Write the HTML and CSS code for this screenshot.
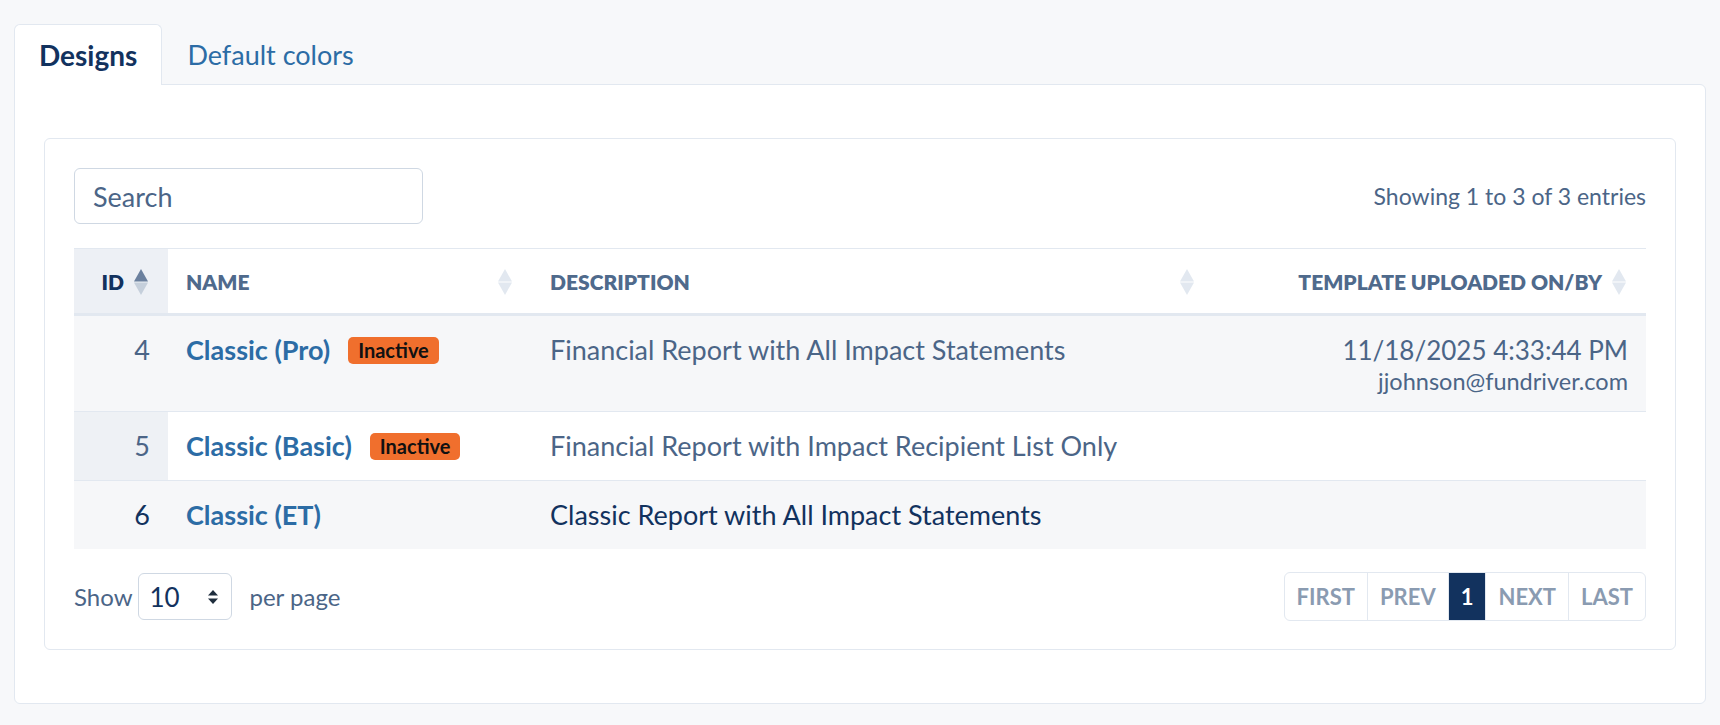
FILE: index.html
```html
<!DOCTYPE html>
<html lang="en">
<head>
  <meta charset="UTF-8" />
  <meta name="viewport" content="width=device-width, initial-scale=1.0" />
  <title>Report Designs</title>
  <link rel="stylesheet" href="styles.css">
</head>
<body>
  <div class="tabs">
    <a class="tab active" href="#">Designs</a>
    <a class="tab" href="#">Default colors</a>
  </div>

  <div class="panel">
    <div class="card">
      <div class="toolbar">
        <input type="text" class="search" placeholder="Search" />
        <div class="info">Showing 1 to 3 of 3 entries</div>
      </div>

      <table class="grid">
        <thead>
          <tr>
            <th class="col-id sorted">ID
              <svg class="sort" viewBox="0 0 14 26"><path class="up" d="M7 0 L14 12.5 L0 12.5 Z"/><path class="down" d="M0 13.5 L14 13.5 L7 26 Z"/></svg>
            </th>
            <th class="col-name">Name
              <svg class="sort" viewBox="0 0 14 26"><path d="M7 0 L14 12.5 L0 12.5 Z"/><path d="M0 13.5 L14 13.5 L7 26 Z"/></svg>
            </th>
            <th class="col-desc">Description
              <svg class="sort" viewBox="0 0 14 26"><path d="M7 0 L14 12.5 L0 12.5 Z"/><path d="M0 13.5 L14 13.5 L7 26 Z"/></svg>
            </th>
            <th class="col-date">Template uploaded on/by
              <svg class="sort" viewBox="0 0 14 26"><path d="M7 0 L14 12.5 L0 12.5 Z"/><path d="M0 13.5 L14 13.5 L7 26 Z"/></svg>
            </th>
          </tr>
        </thead>
        <tbody>
          <tr class="muted">
            <td class="col-id">4</td>
            <td><a href="#" class="name">Classic (Pro)</a><span class="badge">Inactive</span></td>
            <td>Financial Report with All Impact Statements</td>
            <td class="col-date">
              <div class="on">11/18/2025 4:33:44 PM</div>
              <div class="by">jjohnson@fundriver.com</div>
            </td>
          </tr>
          <tr class="muted">
            <td class="col-id">5</td>
            <td><a href="#" class="name">Classic (Basic)</a><span class="badge">Inactive</span></td>
            <td>Financial Report with Impact Recipient List Only</td>
            <td class="col-date"></td>
          </tr>
          <tr>
            <td class="col-id">6</td>
            <td><a href="#" class="name">Classic (ET)</a></td>
            <td>Classic Report with All Impact Statements</td>
            <td class="col-date"></td>
          </tr>
        </tbody>
      </table>

      <div class="footer">
        <div class="length">
          Show
          <div class="select">10
            <svg viewBox="0 0 10 14"><path d="M5 0 L10 5.5 L0 5.5 Z"/><path d="M0 8.5 L10 8.5 L5 14 Z"/></svg>
          </div>
          per page
        </div>
        <div class="pager">
          <a href="#">First</a>
          <a href="#">Prev</a>
          <a href="#" class="current">1</a>
          <a href="#">Next</a>
          <a href="#">Last</a>
        </div>
      </div>
    </div>
  </div>
</body>
</html>
```

FILE: styles.css
```css
body {
  font-family: Lato, "Noto Sans", sans-serif;
  margin: 0;
  padding: 24px 14px 0;
  background: #f7f8fa;
  color: #4b6587;
}
a {
  text-decoration: none;
}
.tabs {
  display: flex;
  height: 60px;
}
.tab {
  display: flex;
  align-items: center;
  padding: 0 24px;
  font-size: 27px;
  color: #2c6ca5;
  border: 1px solid transparent;
  border-bottom: none;
  border-radius: 6px 6px 0 0;
}
.tab.active {
  background: white;
  color: #12325e;
  font-size: 28px;
  font-weight: bold;
  border-color: #e2e8f0;
  margin-bottom: -1px;
  position: relative;
  z-index: 1;
}
.panel {
  background: white;
  border: 1px solid #e2e8f0;
  border-radius: 0 6px 6px 6px;
  padding: 53px 29px;
}
.card {
  border: 1px solid #e2e8f0;
  border-radius: 6px;
  padding: 29px 29px 28px;
}
.toolbar {
  display: flex;
  justify-content: space-between;
  align-items: center;
  margin-bottom: 24px;
}
.search {
  width: 349px;
  height: 56px;
  box-sizing: border-box;
  border: 1px solid #cfd8e3;
  border-radius: 6px;
  padding: 0 18px;
  font-family: inherit;
  font-size: 27px;
  color: #12325e;
}
.search::placeholder {
  color: #4b6587;
}
.info {
  font-size: 23px;
}
.grid {
  width: 100%;
  border-collapse: collapse;
  border-top: 1px solid #e2e8f0;
}
.grid th {
  position: relative;
  height: 64px;
  padding: 0 44px 0 18px;
  text-align: left;
  font-size: 21px;
  font-weight: 800;
  text-transform: uppercase;
  color: #4f6a8c;
  border-bottom: 3px solid #e2e8f0;
}
.grid th.col-id {
  color: #12325e;
}
.sort {
  position: absolute;
  right: 20px;
  top: 20px;
  width: 14px;
  height: 26px;
  fill: #e2e8f0;
}
.sorted .sort .up {
  fill: #6b809e;
}
.sorted .sort .down {
  fill: #c5cfdb;
}
.col-id {
  width: 32px;
  text-align: right !important;
  background: #edf0f5;
}
.col-name {
  width: 302px;
}
.col-desc {
  width: 620px;
}
.col-date {
  text-align: right !important;
}
.grid td {
  padding: 16px 18px;
  font-size: 27px;
  line-height: 36px;
  vertical-align: top;
  color: #12325e;
  border-bottom: 1px solid #e2e8f0;
}
.grid tbody tr:nth-child(odd) td {
  background: #f6f7f9;
}
.grid tbody td.col-id {
  background: #eef1f5;
}
.grid tbody tr:last-child td {
  border-bottom: none;
}
.grid tr.muted td {
  color: #4b6587;
}
.name {
  color: #2c6ca5;
  font-weight: bold;
}
.badge {
  display: inline-block;
  margin-left: 18px;
  padding: 0 10px;
  height: 27px;
  line-height: 27px;
  vertical-align: 2px;
  background: #f06f2d;
  color: #111;
  font-size: 20px;
  font-weight: bold;
  border-radius: 5px;
}
.col-date .on {
  font-size: 26px;
}
.col-date .by {
  font-size: 23.5px;
  line-height: 27px;
}
.footer {
  display: flex;
  justify-content: space-between;
  align-items: center;
  margin-top: 23px;
}
.length {
  display: flex;
  align-items: center;
  font-size: 24px;
}
.select {
  display: flex;
  align-items: center;
  justify-content: space-between;
  width: 94px;
  height: 47px;
  box-sizing: border-box;
  margin: 0 18px 0 5px;
  padding: 0 13px 0 11px;
  border: 1px solid #cfd8e3;
  border-radius: 6px;
  font-size: 26px;
  color: #12325e;
}
.select svg {
  width: 10px;
  height: 14px;
  fill: #1f2d3d;
}
.pager {
  display: flex;
  height: 47px;
  border: 1px solid #e2e8f0;
  border-radius: 6px;
  overflow: hidden;
}
.pager a {
  display: flex;
  align-items: center;
  padding: 0 12px;
  font-size: 22px;
  font-weight: bold;
  text-transform: uppercase;
  color: #8a9bb1;
  border-left: 1px solid #e2e8f0;
}
.pager a:first-child {
  border-left: none;
}
.pager a.current {
  background: #12325e;
  color: white;
  padding: 0 12px;
}
```
